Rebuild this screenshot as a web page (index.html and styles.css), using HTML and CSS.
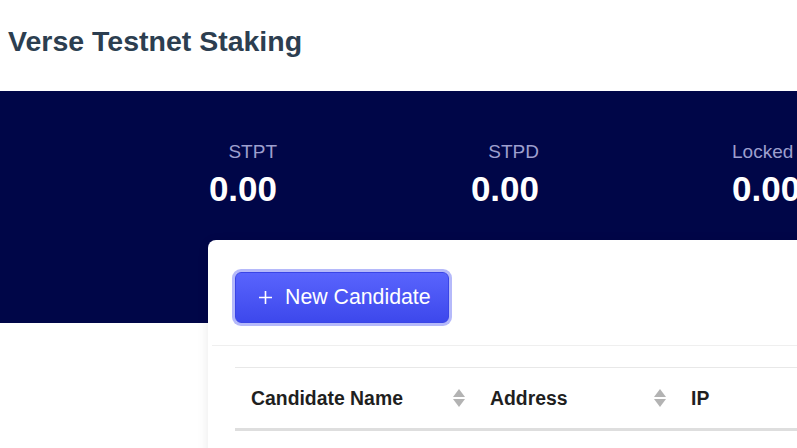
FILE: index.html
```html
<!DOCTYPE html>
<html>
<head>
    <meta charset="UTF-8"/>
    <title>Verse Testnet Staking</title>
    <link rel="stylesheet" href="styles.css">
</head>
<body>
<header class="title-bar">
    <h1>Verse Testnet Staking</h1>
</header>

<section class="banner">
    <div class="stats">
        <div class="stat">
            <div class="stat-label">STPT</div>
            <div class="stat-value">0.00</div>
        </div>
        <div class="stat">
            <div class="stat-label">STPD</div>
            <div class="stat-value">0.00</div>
        </div>
        <div class="stat stat-last">
            <div class="stat-label">Locked</div>
            <div class="stat-value">0.00</div>
        </div>
    </div>
</section>

<main class="card">
    <div class="toolbar">
        <button class="btn-primary" type="button">
            <svg class="plus" width="15" height="15" viewBox="0 0 15 15">
                <path d="M7.5 1v13M1 7.5h13" stroke="#fff" stroke-width="1.6" fill="none"/>
            </svg>
            <span>New Candidate</span>
        </button>
    </div>

    <table class="candidates">
        <thead>
        <tr>
            <th class="col-name"><div class="th-inner">Candidate Name <span class="sorter"></span></div></th>
            <th class="col-address"><div class="th-inner">Address <span class="sorter"></span></div></th>
            <th class="col-ip"><div class="th-inner">IP</div></th>
        </tr>
        </thead>
    </table>
</main>
</body>
</html>
```

FILE: styles.css
```css
html, body {
    margin: 0;
    overflow: hidden;
}

body {
    font-family: "Liberation Sans", Arial, sans-serif;
    background: #fff;
    width: 797px;
    height: 448px;
}

.title-bar {
    height: 91px;
    box-sizing: border-box;
    padding: 25px 8px 0;
}

.title-bar h1 {
    margin: 0;
    font-size: 28.5px;
    line-height: 32px;
    font-weight: bold;
    color: #2c3e50;
}

.banner {
    height: 232px;
    background: #000648;
    box-sizing: border-box;
    padding-top: 50px;
}

.stats {
    display: flex;
    padding-left: 15px;
}

.stat {
    flex: 0 0 262px;
    text-align: right;
}

.stat-last {
    text-align: left;
    padding-left: 455px;
    margin-left: -262px;
    flex-basis: auto;
    white-space: nowrap;
}

.stat-label {
    font-size: 19px;
    line-height: 21px;
    color: #9d9fce;
    margin-bottom: 7px;
}

.stat-value {
    font-size: 35px;
    line-height: 40px;
    font-weight: bold;
    color: #fff;
}

.card {
    margin: -83px 0 0 208px;
    width: 700px;
    height: 260px;
    background: #fff;
    border-radius: 8px;
    box-shadow: 0 2px 12px rgba(0, 0, 0, 0.09);
}

.toolbar {
    padding: 32px 0 22px 23px;
    border-bottom: 1px solid #efefef;
    margin-left: 4px;
}

.btn-primary {
    display: inline-flex;
    align-items: center;
    gap: 12px;
    height: 51px;
    padding: 0 17px 0 22px;
    border: 1px solid #3a45e6;
    border-radius: 6px;
    background: linear-gradient(#5964fd, #3d48ec);
    box-shadow: 0 0 0 3px #b5b9fa;
    color: #fff;
    font-family: "Liberation Sans", Arial, sans-serif;
    font-size: 21.3px;
    cursor: pointer;
}

.plus {
    display: block;
}

.candidates {
    margin: 21px 0 0 27px;
    border-collapse: collapse;
    width: 650px;
    border-top: 1px solid #e8e8e8;
    border-bottom: 3px solid #dedede;
}

.candidates th {
    height: 60px;
    padding: 0 8px 0 16px;
    text-align: left;
    font-size: 19.4px;
    font-weight: bold;
    color: #1f1f1f;
}

.col-name {
    width: 215px;
}

.col-address {
    width: 177px;
}

.th-inner {
    display: flex;
    align-items: center;
    justify-content: space-between;
}

.sorter {
    display: flex;
    flex-direction: column;
    gap: 2px;
    width: 13px;
}

.sorter::before,
.sorter::after {
    content: "";
    width: 0;
    height: 0;
    border-left: 6.5px solid transparent;
    border-right: 6.5px solid transparent;
}

.sorter::before {
    border-bottom: 8px solid #b3b3b3;
}

.sorter::after {
    border-top: 8px solid #b3b3b3;
}
```
